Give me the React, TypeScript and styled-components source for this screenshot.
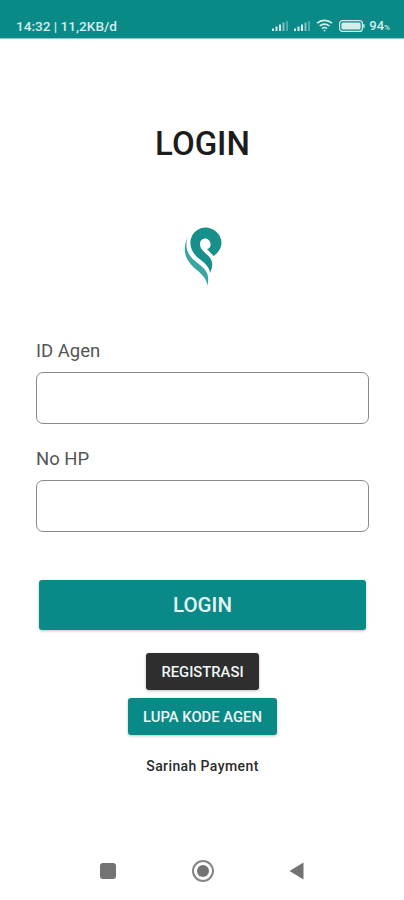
import styled, { createGlobalStyle } from 'styled-components';

const GlobalStyle = createGlobalStyle`
  html, body {
    margin: 0;
    padding: 0;
    background: #fff;
  }
  * {
    box-sizing: border-box;
  }
`;

const TEAL = '#0a8a87';

function SignalIcon() {
  return (
    <svg width="18" height="10" viewBox="0 0 18 10">
      <rect x="0" y="7.5" width="2" height="2.5" fill="#d5ecea" />
      <rect x="3.500" y="5.500" width="2" height="4.500" fill="#d5ecea" />
      <rect x="7" y="3.500" width="2" height="6.500" fill="#d5ecea" />
      <rect x="10.500" y="1.500" width="2" height="8.500" fill="#d5ecea" opacity="0.6" />
      <rect x="14" y="0" width="2" height="10" fill="#d5ecea" opacity="0.35" />
    </svg>
  );
}

function WifiIcon() {
  return (
    <svg width="17" height="13" viewBox="0 0 17 13" fill="none" stroke="#d5ecea" strokeWidth="1.6">
      <path d="M1 4.200C5.200 .4 11.800 .4 16 4.200" />
      <path d="M3.600 7C6.400 4.500 10.600 4.500 13.400 7" />
      <path d="M6 9.600C7.400 8.400 9.600 8.400 11 9.600" />
      <circle cx="8.500" cy="11.600" r="0.9" fill="#d5ecea" stroke="none" />
    </svg>
  );
}

function BatteryIcon() {
  return (
    <svg width="26" height="12" viewBox="0 0 26 12">
      <rect x="0.6" y="0.6" width="22.800" height="10.800" rx="3" fill="none" stroke="#d5ecea" strokeWidth="1.2" />
      <rect x="2.400" y="2.400" width="19.200" height="7.200" rx="1.500" fill="#d5ecea" />
      <rect x="24.200" y="4" width="1.400" height="4" rx="0.7" fill="#d5ecea" />
    </svg>
  );
}

function Logo() {
  return (
    <svg width="38" height="60" viewBox="0 0 38 60">
      <path
        d="M13 30C7 24 4.500 16 8 9C11 3 17 0 23 .5C31 1.500 37.500 8 37.500 16C37.500 21 34 26 29.500 29L23 22C26 21.500 27 19 26.500 16.500C26 13.500 23.500 11 20.500 11.500C17 12 15.500 15 16 18C16.800 23 22 26.500 25.500 30C29 34 29 40 26 46C25.500 40 21 36 13 30Z"
        fill="#17908c"
      />
      <path
        d="M3.500 11C1.500 17 2 24 7 30C12 36 20 39.500 23 46C24.500 49.500 24.500 54.500 23.500 59C22.700 53 19.500 48.500 14 44C8 39 2.200 33.500 1 25.500C.4 20 1.200 15 3.500 11Z"
        fill="#3aa6a2"
      />
    </svg>
  );
}

export default function App() {
  return (
    <Page>
      <GlobalStyle />
      <StatusBar>
        <StatusText>14:32 | 11,2KB/d</StatusText>
        <StatusIcons>
          <SignalIcon />
          <SignalIcon />
          <WifiSlot>
            <WifiIcon />
          </WifiSlot>
          <BatteryIcon />
          <BatteryText>
            94<small>%</small>
          </BatteryText>
        </StatusIcons>
      </StatusBar>
      <Content>
        <Title>LOGIN</Title>
        <LogoBox>
          <Logo />
        </LogoBox>
        <FieldLabel>ID Agen</FieldLabel>
        <FieldBox />
        <FieldLabel $second>No HP</FieldLabel>
        <FieldBox />
        <LoginButton>LOGIN</LoginButton>
        <SmallButton $dark>REGISTRASI</SmallButton>
        <SmallButton>LUPA KODE AGEN</SmallButton>
        <Brand>Sarinah Payment</Brand>
      </Content>
      <NavBar>
        <NavSquare />
        <NavCircle>
          <NavDot />
        </NavCircle>
        <svg width="15" height="18" viewBox="0 0 15 18">
          <path d="M14.500 .5V17.500L.5 9Z" fill="#737373" />
        </svg>
      </NavBar>
    </Page>
  );
}

const Page = styled.div`
  width: 404px;
  height: 900px;
  display: flex;
  flex-direction: column;
  background: #fff;
  font-family: Roboto, 'Liberation Sans', sans-serif;
  overflow: hidden;
`;

const StatusBar = styled.div`
  height: 39px;
  flex: none;
  display: flex;
  align-items: center;
  justify-content: space-between;
  padding: 13px 14px 0 16px;
  background: ${TEAL};
  border-bottom: 1px solid #8cc9c6;
`;

const StatusText = styled.span`
  font-size: 13.600px;
  font-weight: 500;
  color: #d5ecea;
`;

const StatusIcons = styled.div`
  display: flex;
  align-items: center;
  gap: 4px;
`;

const WifiSlot = styled.span`
  display: flex;
  margin-right: 2px;
`;

const BatteryText = styled.span`
  font-size: 13px;
  font-weight: 500;
  color: #d5ecea;

  small {
    font-size: 8px;
  }
`;

const Content = styled.div`
  flex: 1;
  display: flex;
  flex-direction: column;
  align-items: center;
  padding: 0 35px 0 36px;
`;

const Title = styled.h1`
  margin: 85px 0 0;
  font-size: 33px;
  line-height: 40px;
  font-weight: 500;
  color: #1c1c1c;
`;

const LogoBox = styled.div`
  height: 60px;
  margin-top: 63px;
  display: flex;
`;

const FieldLabel = styled.label<{ $second?: boolean }>`
  align-self: flex-start;
  margin-top: ${(p) => (p.$second ? '23px' : '52px')};
  font-size: 18.500px;
  line-height: 24px;
  color: #555;
`;

const FieldBox = styled.div`
  width: 100%;
  height: 52px;
  margin-top: 9px;
  border: 1.5px solid #8a8a8a;
  border-radius: 7px;
  background: #fff;
`;

const LoginButton = styled.div`
  width: 327px;
  height: 50px;
  margin-top: 48px;
  display: flex;
  align-items: center;
  justify-content: center;
  background: ${TEAL};
  border-radius: 3px;
  box-shadow: 0 1px 3px rgba(0, 0, 0, 0.25);
  font-size: 20.500px;
  font-weight: 500;
  color: #e6f4f3;
`;

const SmallButton = styled.div<{ $dark?: boolean }>`
  height: 37px;
  margin-top: ${(p) => (p.$dark ? '23px' : '8px')};
  padding: 0 15.500px;
  display: flex;
  align-items: center;
  background: ${(p) => (p.$dark ? '#2e2e2e' : TEAL)};
  border-radius: 3px;
  box-shadow: 0 1px 3px rgba(0, 0, 0, 0.25);
  font-size: 14.800px;
  font-weight: 500;
  color: #eef6f6;
`;

const Brand = styled.div`
  margin-top: 22px;
  font-size: 14px;
  line-height: 18px;
  font-weight: 500;
  letter-spacing: 0.4px;
  color: #2b2b2b;
`;

const NavBar = styled.div`
  height: 52px;
  flex: none;
  display: flex;
  align-items: flex-start;
  justify-content: space-between;
  padding: 14px 100px 0;
`;

const NavSquare = styled.div`
  width: 16px;
  height: 16px;
  margin-top: 1px;
  background: #737373;
  border-radius: 3px;
`;

const NavCircle = styled.div`
  width: 22px;
  height: 22px;
  margin-top: -2px;
  display: flex;
  align-items: center;
  justify-content: center;
  border: 2px solid #858585;
  border-radius: 50%;
`;

const NavDot = styled.div`
  width: 12px;
  height: 12px;
  border-radius: 50%;
  background: #737373;
`;
